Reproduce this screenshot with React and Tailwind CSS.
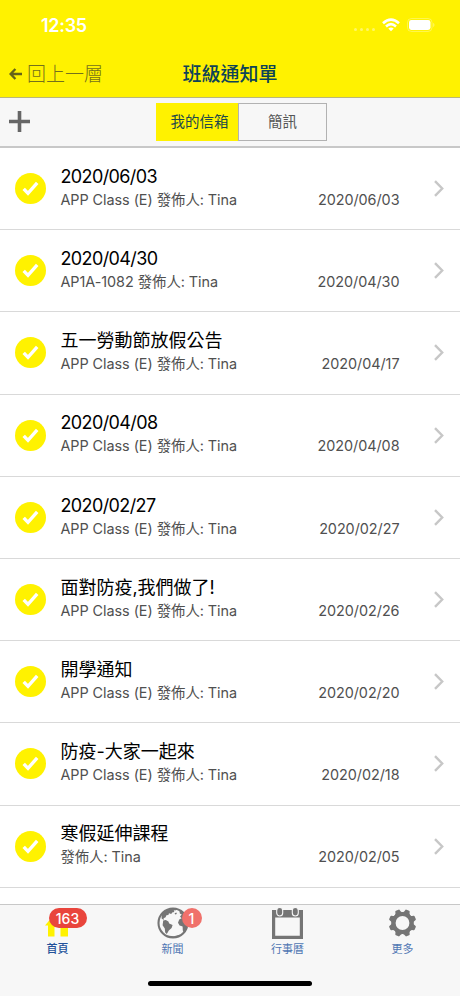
const notices = [
  { title: "2020/06/03", info: "APP Class (E) 發佈人: Tina", date: "2020/06/03" },
  { title: "2020/04/30", info: "AP1A-1082 發佈人: Tina", date: "2020/04/30" },
  { title: "五一勞動節放假公告", info: "APP Class (E) 發佈人: Tina", date: "2020/04/17" },
  { title: "2020/04/08", info: "APP Class (E) 發佈人: Tina", date: "2020/04/08" },
  { title: "2020/02/27", info: "APP Class (E) 發佈人: Tina", date: "2020/02/27" },
  { title: "面對防疫,我們做了!", info: "APP Class (E) 發佈人: Tina", date: "2020/02/26" },
  { title: "開學通知", info: "APP Class (E) 發佈人: Tina", date: "2020/02/20" },
  { title: "防疫-大家一起來", info: "APP Class (E) 發佈人: Tina", date: "2020/02/18" },
  { title: "寒假延伸課程", info: "發佈人: Tina", date: "2020/02/05" },
];

/* ================= ICONS ================= */

function HomeIcon() {
  return (
    <svg width="32" height="32" viewBox="0 0 32 32" fill="#fff200">
      <path d="M16 3 L29 16.5 H26 V29.5 H18.5 V20 H12.5 V29.5 H6 V18.5 H3 Z" />
    </svg>
  );
}

function GlobeIcon() {
  return (
    <svg width="32" height="32" viewBox="0 0 32 32" fill="#757575">
      <circle cx="16" cy="16" r="14.5" fill="none" stroke="#757575" strokeWidth="2.1" />
      {/* north america */}
      <path d="M4.6 7.2C7 3.8 10.4 2 14.5 1.4L19.5 2 18.6 3.6 16.8 3.2 17.3 5 15.2 5.6 14.2 7 12 6.2 11.4 8 9.4 8.2 8.6 10.2 6.6 11.2 6.8 13 4.6 11.6Z" />
      <path d="M17.6 6.2 19.4 5.6 19.8 7 18.2 7.6Z" />
      {/* south america */}
      <path d="M6.2 13.6 8.8 13 11.4 14.6 12.2 16.4 15.6 18 14.6 21 11.8 23.4 9.8 27 8.2 25.4 7.8 21.4 5.6 18.2Z" />
      {/* europe and africa */}
      <path d="M21 2.4C27 4.8 30.6 9.8 30.8 16C30.6 20 29.4 23 27 25.6L25.8 23.6 25.6 19.6 22.6 18.6 21 15.8 22.2 12.4 24.6 11.2 23 9.6 24.8 7.4 22.8 6.4 22.6 4.4Z" />
      {/* antarctica */}
      <path d="M7.5 28 12 28.8 17 29.2 22.5 27.8 24 27.6 20 30 14 30.8Z" />
    </svg>
  );
}

function CalendarIcon() {
  return (
    <svg width="32" height="32" viewBox="0 0 32 32">
      <path fill="#757575" fillRule="evenodd" d="M0 3H31V32H0ZM3.2 10.6V28.8H27.8V10.6Z" />
      <rect x="4.7" y=".5" width="6" height="8.5" rx="3" fill="#757575" stroke="#f7f7f7" strokeWidth="1.1" />
      <rect x="20.3" y=".5" width="6" height="8.5" rx="3" fill="#757575" stroke="#f7f7f7" strokeWidth="1.1" />
    </svg>
  );
}

function GearIcon() {
  return (
    <svg width="32" height="32" viewBox="-15.5 -16 32 32" fill="#757575">
      <circle r="9" fill="none" stroke="#757575" strokeWidth="4.2" />
      {[22.5, 67.5, 112.5, 157.5, 202.5, 247.5, 292.5, 337.5].map((a) => (
        <path key={a} transform={`rotate(${a})`} d="M-4.4 -9.8 Q-2.6 -11 -2.5 -12.6 Q-2.4 -13.8 -1.4 -13.8 H1.4 Q2.4 -13.8 2.5 -12.6 Q2.6 -11 4.4 -9.8Z" />
      ))}
    </svg>
  );
}

const tabs = [
  { label: "首頁", icon: <HomeIcon />, badge: "163", active: true },
  { label: "新聞", icon: <GlobeIcon />, badge: "1" },
  { label: "行事曆", icon: <CalendarIcon /> },
  { label: "更多", icon: <GearIcon /> },
];

/* ================= HEADER ================= */

function StatusBar() {
  return (
    <div className="flex h-12 items-start justify-between pl-[41px] pr-[25px] pt-[15px] text-white">
      <span className="text-[18px] leading-[22px] font-semibold tracking-[-0.3px]">12:35</span>
      <div className="flex items-center pt-[3px]">
        <div className="mr-[7px] mt-[9px] flex gap-[3px] opacity-40">
          {[0, 1, 2, 3].map((i) => (
            <i key={i} className="size-[3px] rounded-full bg-white" />
          ))}
        </div>
        <svg width="18" height="14" viewBox="0 0 18 14" fill="none" stroke="white" strokeWidth="2.6">
          <path d="M1 5.3Q9 -2.1 17 5.3" />
          <path d="M4 8.4Q9 4 14 8.4" />
          <path d="M9 13.3 6.3 10.5Q9 8.5 11.7 10.5Z" fill="white" stroke="none" />
        </svg>
        <svg className="ml-[7px]" width="28" height="14" viewBox="0 0 28 14">
          <rect x=".5" y=".5" width="24.5" height="13" rx="4" fill="none" stroke="white" opacity=".3" />
          <rect x="2" y="2" width="21.5" height="10" rx="2.4" fill="white" />
          <path d="M26.4 4.8Q28.4 7 26.4 9.2Z" fill="white" opacity=".5" />
        </svg>
      </div>
    </div>
  );
}

function Header() {
  return (
    <header className="h-[98px] shrink-0 border-b border-[#b9b77c] bg-[#fff200]">
      <StatusBar />
      <div className="grid h-[53px] grid-cols-[150px_1fr_150px] items-center">
        <button className="flex items-center pl-[9px] text-[#74701c]">
          <svg className="mr-[5px] mb-0.5" width="13" height="12" viewBox="0 0 13 12" fill="none" stroke="#656219" strokeWidth="2.3">
            <path d="M6.4 1 1.6 6l4.8 5M2 6h11" />
          </svg>
          <span className="text-[19px] leading-7 font-light">回上一層</span>
        </button>
        <h1 className="text-center text-[19px] leading-7 font-medium text-[#0d4358]">班級通知單</h1>
      </div>
    </header>
  );
}

function Toolbar() {
  return (
    <div className="grid h-[50px] shrink-0 grid-cols-[156px_171px_1fr] items-center border-b-2 border-[#c8c8c8] bg-[#f7f7f7]">
      <button aria-label="+" className="pb-0.5 pl-[9px]">
        <svg width="21" height="21" viewBox="0 0 21 21" stroke="#666" strokeWidth="3.6">
          <path d="M10.5 0v21M0 10.5h21" />
        </svg>
      </button>
      <div className="flex h-[38px] text-[14.5px]">
        <button className="w-[82px] bg-[#fff200] pl-[5px] text-[#20484b]">我的信箱</button>
        <button className="flex-1 border border-[#b2b2b2] text-[#555]">簡訊</button>
      </div>
    </div>
  );
}

/* ================= LIST ================= */

function NoticeRow({ notice }) {
  const isDate = notice.title === notice.date;

  return (
    <li className="flex h-[82.2px] items-center border-b border-[#d9d9d9] pl-[15px] pr-4">
      <svg className="mr-[14.4px] shrink-0" width="31" height="31" viewBox="0 0 31 31">
        <circle cx="15.5" cy="15.5" r="15.5" fill="#fff200" />
        <path d="m8.7 15.8 4.3 4.5 9.2-10.5" fill="none" stroke="white" strokeWidth="3.4" />
      </svg>
      <div className="flex-1 pb-[3.4px] whitespace-nowrap">
        <div className={`pt-px text-[18px] leading-6 text-black ${isDate ? "tracking-[-0.6px]" : ""}`}>
          {notice.title}
        </div>
        <div className="flex justify-between text-[14.4px] leading-[21px] text-[#505050]">
          <span className="tracking-[-0.04px]">{notice.info}</span>
          <span className="tracking-[-0.05px]">{notice.date}</span>
        </div>
      </div>
      <svg className="ml-[34.5px] shrink-0" width="10" height="17" viewBox="0 0 10 17" fill="none" stroke="#c7c7c7" strokeWidth="2.4">
        <path d="m1 1.2 7.2 7.3L1 15.8" />
      </svg>
    </li>
  );
}

/* ================= TAB BAR ================= */

function TabBar() {
  return (
    <nav className="h-[92px] shrink-0 border-t border-[#c8c8c8] bg-[#f7f7f7]">
      <div className="grid h-[76px] grid-cols-4 items-start pt-[2px]">
        {tabs.map((tab) => (
          <button key={tab.label} className="flex flex-col items-center">
            <span className="relative size-8">
              {tab.icon}
              {tab.badge && (
                <span
                  className={`absolute top-[1px] flex h-5 items-center justify-center rounded-full text-[14px] font-medium text-white ${
                    tab.active ? "left-[7px] w-[38px] bg-[#e9453c]" : "left-[25px] w-5 bg-[#f0716b]"
                  }`}
                >
                  {tab.badge}
                </span>
              )}
            </span>
            <span className={`mt-[2px] text-[11px] leading-4 ${tab.active ? "font-medium text-[#23529a]" : "text-[#4f76b3]"}`}>
              {tab.label}
            </span>
          </button>
        ))}
      </div>
      <div className="mx-auto h-[5px] w-[164px] rounded-full bg-black" />
    </nav>
  );
}

export default function App() {
  return (
    <div className="flex h-[996px] w-[460px] flex-col overflow-hidden bg-white font-['Inter','Noto_Sans_CJK_TC',sans-serif]">
      <Header />
      <Toolbar />
      <ul className="min-h-0 flex-1 overflow-hidden">
        {notices.map((notice) => (
          <NoticeRow key={notice.date} notice={notice} />
        ))}
      </ul>
      <TabBar />
    </div>
  );
}
